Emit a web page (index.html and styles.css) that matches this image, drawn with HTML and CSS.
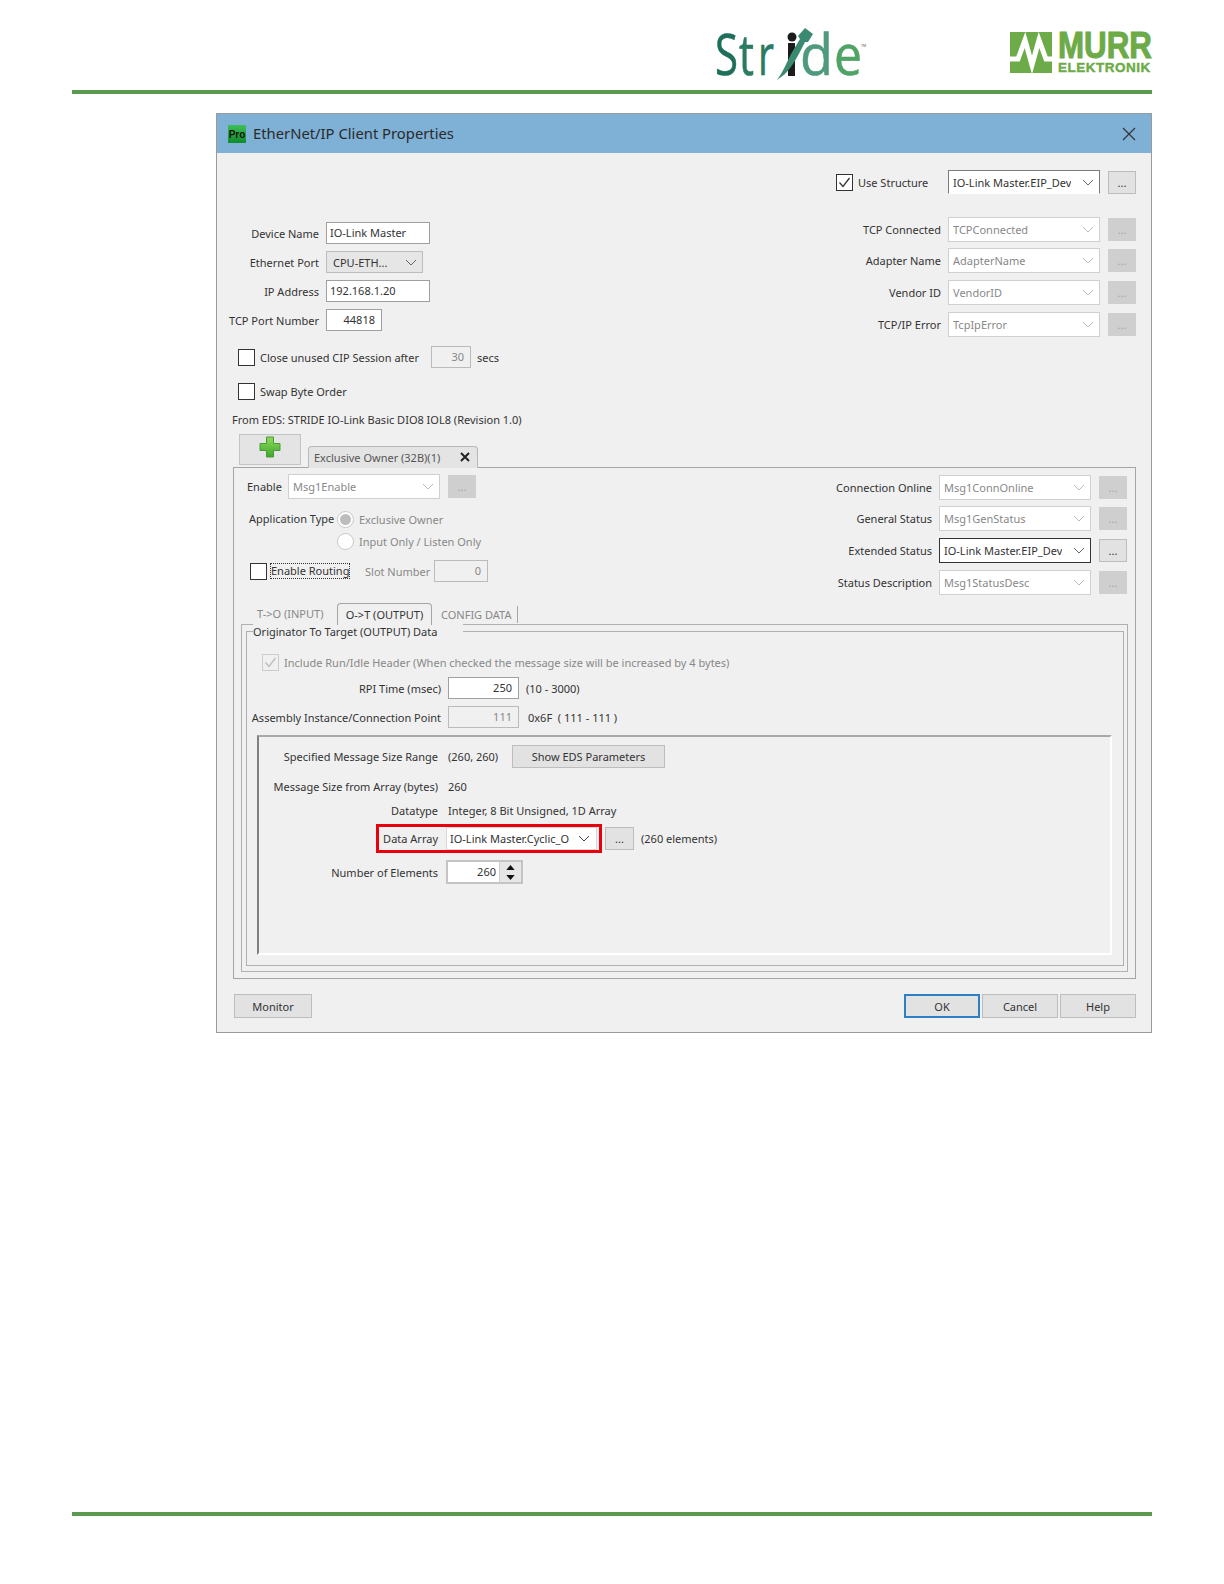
FILE: index.html
```html
<!DOCTYPE html>
<html lang="en">
<head>
<meta charset="utf-8">
<title>EtherNet/IP Client Properties</title>
<link rel="stylesheet" href="styles.css">
</head>
<body>
<svg class="defs" width="0" height="0">
  <defs>
    <symbol id="chev" viewBox="0 0 12 7"><polyline points="1,1 6,6 11,1" fill="none" stroke="currentColor" stroke-width="1"/></symbol>
    <symbol id="tick" viewBox="0 0 15 15"><polyline points="2.5,7.5 6,11.5 12.5,3" fill="none" stroke="currentColor" stroke-width="1.3"/></symbol>
  </defs>
</svg>
<div class="page">
  <header class="masthead">
    <svg class="logo-stride" viewBox="0 0 152 56" width="152" height="56">
      <text class="stride s1" x="2" y="49" textLength="23" lengthAdjust="spacingAndGlyphs">S</text>
      <text class="stride s2" x="26" y="49" textLength="15" lengthAdjust="spacingAndGlyphs">t</text>
      <text class="stride s2" x="45" y="49" textLength="16" lengthAdjust="spacingAndGlyphs">r</text>
      <text class="stride s3" x="87" y="49" textLength="33" lengthAdjust="spacingAndGlyphs">d</text>
      <text class="stride s4" x="121" y="49" textLength="28" lengthAdjust="spacingAndGlyphs">e</text>
      <rect x="75" y="17" width="7" height="33" fill="#1c1c1c"/>
      <circle cx="79" cy="11" r="4.500" fill="#1c1c1c"/>
      <path d="M64 54C70 46 74 36 78 28L87 13 85 10 92 2 100 8 95 16 92 16C86 28 80 40 72 48Z" fill="#3a8a72"/>
      <text class="stride-tm" x="148" y="21">TM</text>
    </svg>
    <div class="logo-murr">
      <svg viewBox="0 0 42 41" width="42" height="41">
        <rect width="42" height="41" fill="#6cab47"/>
        <polyline points="0,27 8,27 15,8 22,33 29,8 36,27 42,27" fill="none" stroke="#fff" stroke-width="5"/>
      </svg>
      <div class="murr-text">
        <span class="murr-big">MURR</span>
        <span class="murr-small">ELEKTRONIK</span>
      </div>
    </div>
  </header>
  <div class="rule"></div>

  <section class="dialog">
    <div class="titlebar">
      <span class="app-icon">Pro</span>
      <span class="title">EtherNet/IP Client Properties</span>
      <svg class="close" viewBox="0 0 14 14" width="14" height="14"><path d="M1 1 13 13M13 1 1 13" stroke="#333" stroke-width="1.2" fill="none"/></svg>
    </div>

    <div class="top">
      <div class="top-left">
        <div class="form-grid">
          <label class="lbl">Device Name</label><div class="input w104">IO-Link Master</div>
          <label class="lbl">Ethernet Port</label><div class="select"><span>CPU-ETH...</span><svg class="chev"><use href="#chev"/></svg></div>
          <label class="lbl">IP Address</label><div class="input w104">192.168.1.20</div>
          <label class="lbl">TCP Port Number</label><div class="input w56 right">44818</div>
        </div>
        <div class="check-row first">
          <span class="check"></span><span class="check-label close-label">Close unused CIP Session after</span>
          <div class="input ro w40 right secs-box">30</div><span class="secs">secs</span>
        </div>
        <div class="check-row swap">
          <span class="check"></span><span class="check-label">Swap Byte Order</span>
        </div>
        <div class="eds">From EDS: STRIDE IO-Link Basic DIO8 IOL8 (Revision 1.0)</div>
      </div>
      <div class="top-right">
        <div class="use-row">
          <span class="check"><svg class="tick"><use href="#tick"/></svg></span><span class="check-label use-label">Use Structure</span>
          <div class="combo open"><span>IO-Link Master.EIP_Dev</span><svg class="chev"><use href="#chev"/></svg></div>
          <button class="more">...</button>
        </div>
        <div class="map-rows">
          <div class="map-row"><label class="lbl">TCP Connected</label><div class="combo off"><span>TCPConnected</span><svg class="chev"><use href="#chev"/></svg></div><button class="more off">...</button></div>
          <div class="map-row"><label class="lbl">Adapter Name</label><div class="combo off"><span>AdapterName</span><svg class="chev"><use href="#chev"/></svg></div><button class="more off">...</button></div>
          <div class="map-row"><label class="lbl">Vendor ID</label><div class="combo off"><span>VendorID</span><svg class="chev"><use href="#chev"/></svg></div><button class="more off">...</button></div>
          <div class="map-row"><label class="lbl">TCP/IP Error</label><div class="combo off"><span>TcpIpError</span><svg class="chev"><use href="#chev"/></svg></div><button class="more off">...</button></div>
        </div>
      </div>
    </div>

    <div class="conn-tabs">
      <button class="add-btn">
        <svg viewBox="0 0 22 22" width="22" height="22">
          <defs><linearGradient id="pg" x1="0" x2="0" y1="0" y2="1"><stop offset="0" stop-color="#8fdc5a"/><stop offset="1" stop-color="#3fa52f"/></linearGradient></defs>
          <path d="M7.5 1h7v6.500H21v7h-6.500V21h-7v-6.500H1v-7h6.500z" fill="url(#pg)" stroke="#4b9a3a" stroke-width="1"/>
        </svg>
      </button>
      <div class="conn-tab"><span>Exclusive Owner (32B)(1)</span>
        <svg viewBox="0 0 10 10" width="10" height="10"><path d="M1 1 9 9M9 1 1 9" stroke="#222" stroke-width="2" fill="none"/></svg>
      </div>
    </div>

    <div class="panel">
      <div class="panel-top">
        <div class="panel-left">
          <div class="enable-row">
            <label class="enable-label">Enable</label>
            <div class="combo off"><span>Msg1Enable</span><svg class="chev"><use href="#chev"/></svg></div>
            <button class="more off">...</button>
          </div>
          <div class="app-type">
            <label class="app-label">Application Type</label>
            <div class="radios">
              <div class="radio-row"><span class="radio on"></span><span class="muted">Exclusive Owner</span></div>
              <div class="radio-row"><span class="radio"></span><span class="muted">Input Only / Listen Only</span></div>
            </div>
          </div>
          <div class="routing-row">
            <span class="check"></span>
            <span class="focus-label">Enable Routing</span>
            <span class="muted slot-label">Slot Number</span>
            <div class="input ro w54 right">0</div>
          </div>
        </div>
        <div class="panel-right">
          <div class="map-row"><label class="lbl">Connection Online</label><div class="combo off"><span>Msg1ConnOnline</span><svg class="chev"><use href="#chev"/></svg></div><button class="more off">...</button></div>
          <div class="map-row"><label class="lbl">General Status</label><div class="combo off"><span>Msg1GenStatus</span><svg class="chev"><use href="#chev"/></svg></div><button class="more off">...</button></div>
          <div class="map-row"><label class="lbl">Extended Status</label><div class="combo live"><span>IO-Link Master.EIP_Dev</span><svg class="chev"><use href="#chev"/></svg></div><button class="more">...</button></div>
          <div class="map-row"><label class="lbl">Status Description</label><div class="combo off"><span>Msg1StatusDesc</span><svg class="chev"><use href="#chev"/></svg></div><button class="more off">...</button></div>
        </div>
      </div>

      <div class="tabs">
        <div class="tab muted first-tab">T-&gt;O (INPUT)</div>
        <div class="tab active">O-&gt;T (OUTPUT)</div>
        <div class="tab muted last-tab">CONFIG DATA</div>
      </div>
      <div class="tab-body">
        <div class="group">
          <div class="group-title">Originator To Target (OUTPUT) Data</div>
          <div class="include-row">
            <span class="check off"><svg class="tick"><use href="#tick"/></svg></span>
            <span class="muted include-label">Include Run/Idle Header (When checked the message size will be increased by 4 bytes)</span>
          </div>
          <div class="field-row rpi">
            <label class="lbl">RPI Time (msec)</label><div class="input w71 right">250</div><span class="aside">(10 - 3000)</span>
          </div>
          <div class="field-row asm">
            <label class="lbl">Assembly Instance/Connection Point</label><div class="input ro w71 right">111</div><span class="aside wide">0x6F&nbsp; ( 111 - 111 )</span>
          </div>
          <div class="inner">
            <div class="inner-row spec">
              <label class="lbl">Specified Message Size Range</label><span class="val w64">(260, 260)</span><button class="btn eds-btn">Show EDS Parameters</button>
            </div>
            <div class="inner-row size">
              <label class="lbl">Message Size from Array (bytes)</label><span class="val">260</span>
            </div>
            <div class="inner-row dtype">
              <label class="lbl">Datatype</label><span class="val">Integer, 8 Bit Unsigned, 1D Array</span>
            </div>
            <div class="array-row">
              <div class="highlight">
                <label class="lbl hl-label">Data Array</label>
                <div class="combo hl-combo"><span>IO-Link Master.Cyclic_O</span><svg class="chev"><use href="#chev"/></svg></div>
              </div>
              <button class="more array-more">...</button>
              <span class="aside">(260 elements)</span>
            </div>
            <div class="inner-row count">
              <label class="lbl">Number of Elements</label>
              <div class="spinner"><span class="spin-val">260</span>
                <div class="spin-btns">
                  <span class="spin"><svg viewBox="0 0 10 6" width="9" height="5"><path d="M5 0 10 6H0z" fill="#111"/></svg></span>
                  <span class="spin"><svg viewBox="0 0 10 6" width="9" height="5"><path d="M0 0H10L5 6z" fill="#111"/></svg></span>
                </div>
              </div>
            </div>
          </div>
        </div>
      </div>
    </div>

    <div class="actions">
      <button class="btn act">Monitor</button>
      <div class="act-right">
        <button class="btn act ok">OK</button>
        <button class="btn act">Cancel</button>
        <button class="btn act">Help</button>
      </div>
    </div>
  </section>
  <div class="rule bottom"></div>
</div>
</body>
</html>
```
FILE: styles.css
```css
* { box-sizing: border-box; }
html, body { margin: 0; padding: 0; background: #fff; }
body { font-family: "Noto Sans", "Open Sans", sans-serif; font-size: 11px; color: #333; }
.defs { position: absolute; }
.page { width: 1224px; height: 1584px; padding: 0 72px; overflow: hidden; }

.masthead { height: 90px; display: flex; justify-content: flex-end; align-items: flex-start; padding-top: 26px; }
.logo-stride { margin-right: 145px; overflow: visible; }
.stride { font-family: "Open Sans", sans-serif; font-size: 56px; stroke-width: 0.6px; }
.s1 { fill: #1d6f5a; stroke: #1d6f5a; }
.s2 { fill: #2a7b62; stroke: #2a7b62; }
.s3 { fill: #4f9a7c; stroke: #4f9a7c; }
.s4 { fill: #4fa365; stroke: #4fa365; }
.stride-tm { font-size: 3.500px; fill: #555; }
.logo-murr { display: flex; gap: 6px; margin-top: 6px; }
.murr-text { display: flex; flex-direction: column; width: 94px; font-family: "Liberation Sans", sans-serif; font-weight: 700; color: #6cab47; }
.murr-big { font-size: 36px; line-height: 27px; height: 30px; transform: scaleX(0.87); transform-origin: left center; -webkit-text-stroke: 1px #6cab47; white-space: nowrap; }
.murr-small { font-size: 13.5px; line-height: 11px; letter-spacing: 0.5px; -webkit-text-stroke: 0.4px #6cab47; white-space: nowrap; }
.rule { height: 4px; background: #5a9a4f; }
.rule.bottom { margin-top: 479px; }

.dialog { margin: 19px 0 0 144px; width: 936px; height: 920px; border: 1px solid #9a9a9a; background: #f0f0f0; }
.titlebar { height: 39px; background: #7fb0d6; display: flex; align-items: center; padding: 0 15px 0 11px; }
.app-icon { width: 18px; height: 18px; background: linear-gradient(#3fbf55, #0f8a2e); color: #111; font: 700 10px/19px "Liberation Sans", sans-serif; text-align: center; }
.title { margin: 0 0 1px 7px; font-size: 14.8px; color: #2a2a2a; flex: 1; }

.lbl { text-align: right; white-space: nowrap; color: #333; }
.input { height: 22px; background: #fff; border: 1px solid #a0a0a0; line-height: 20px; padding: 0 3px; white-space: nowrap; }
.input.right { text-align: right; padding-right: 6px; }
.input.ro { background: #f0f0f0; color: #888; border-color: #bbb; }
.w104 { width: 104px; }
.w56 { width: 56px; }
.w40 { width: 40px; }
.w54 { width: 54px; }
.w71 { width: 71px; }
.select { width: 97px; height: 22px; background: #e6e6e6; border: 1px solid #bdbdbd; display: flex; align-items: center; justify-content: space-between; padding: 0 5px 0 6px; }
.chev { width: 12px; height: 7px; color: #666; flex: none; }
.check { width: 17px; height: 17px; flex: none; background: #fff; border: 1px solid #333; display: inline-flex; align-items: center; justify-content: center; }
.check.off { background: #f0f0f0; border-color: #ccc; color: #bbb; }
.tick { width: 15px; height: 15px; }
.muted { color: #888; }

.top { height: 281px; display: flex; justify-content: space-between; padding: 0 15px; }
.top-left { padding-top: 69px; width: 400px; }
.form-grid { display: grid; grid-template-columns: 87px auto; justify-content: start; column-gap: 7px; row-gap: 7px; align-items: center; justify-items: start; }
.form-grid .lbl { justify-self: end; }
.check-row { display: flex; align-items: center; height: 22px; margin-top: 13px; padding-left: 6px; }
.check-row.first { margin-top: 15px; }
.check-row.swap { margin-top: 12px; }
.check-label { margin-left: 5px; white-space: nowrap; }
.close-label { width: 158px; }
.secs-box { margin-left: 13px; }
.secs { margin-left: 6px; }
.eds { margin-top: 10px; height: 16px; line-height: 16px; white-space: nowrap; }

.top-right { padding-top: 17px; width: 320px; }
.use-row { display: flex; align-items: center; justify-content: flex-end; height: 24px; }
.use-label { width: 69px; margin-right: 21px; }
.combo { width: 152px; height: 25px; background: #fff; border: 1px solid #d0d0d0; display: flex; align-items: center; justify-content: space-between; padding: 0 5px 0 4px; flex: none; white-space: nowrap; overflow: hidden; }
.combo span { overflow: hidden; }
.combo.open { height: 24px; border-color: #7a7a7a #7a7a7a #fff; }
.combo.off { color: #888; }
.combo.off .chev { color: #bbb; }
.combo.live { border-color: #333; }
.more { width: 28px; height: 23px; margin-left: 8px; flex: none; padding: 0; background: #e2e2e2; border: 1px solid #bdbdbd; color: #333; font: 11px "Noto Sans", sans-serif; }
.more.off { background: #cfcfcf; border-color: #cfcfcf; color: #a5a5a5; }
.map-rows { display: flex; flex-direction: column; gap: 6.7px; margin-top: 22.500px; }
.map-row { display: flex; align-items: center; justify-content: flex-end; height: 25px; }
.map-row .lbl { margin-right: 7px; }

.conn-tabs { height: 33px; display: flex; align-items: flex-start; padding-left: 22px; position: relative; z-index: 1; }
.add-btn { width: 62px; height: 31px; padding: 0 0 2px; background: #e4e4e4; border: 1px solid #c4c4c4; }
.conn-tab { width: 170px; height: 22px; margin: 12px 0 0 7px; background: #e4e4e4; border: 1px solid #b8b8b8; border-bottom-color: #e4e4e4; border-radius: 4px 4px 0 0; display: flex; align-items: center; justify-content: space-between; padding: 0 7px 0 5px; color: #555; }

.panel { margin-left: 16px; width: 903px; height: 512px; border: 1px solid #a5a5a5; padding: 6px 7px 0; }
.panel-top { height: 129px; display: flex; justify-content: space-between; }
.panel-left { padding: 0 0 0 6px; }
.enable-row { display: flex; align-items: center; height: 25px; }
.enable-label { width: 34px; margin-right: 7px; white-space: nowrap; }
.app-type { display: flex; margin-top: 10px; padding-left: 2px; }
.app-label { width: 88px; line-height: 20px; white-space: nowrap; }
.radios { display: flex; flex-direction: column; gap: 1px; }
.radio-row { display: flex; align-items: center; gap: 5px; height: 21px; }
.radio { width: 17px; height: 17px; border-radius: 50%; background: #fff; border: 1px solid #c8c8c8; display: flex; align-items: center; justify-content: center; }
.radio.on::after { content: ""; width: 11px; height: 11px; border-radius: 50%; background: #bdbdbd; }
.routing-row { display: flex; align-items: center; height: 22px; margin-top: 8px; padding-left: 3px; }
.focus-label { margin-left: 4px; width: 78px; outline: 1px dotted #333; line-height: 14px; white-space: nowrap; }
.slot-label { width: 61px; margin: 0 8px 0 16px; white-space: nowrap; }
.panel-right { display: flex; flex-direction: column; gap: 6.7px; padding: 0.5px 1px 0 0; }

.tabs { height: 21px; display: flex; align-items: flex-start; padding-left: 16px; }
.tab { height: 21px; line-height: 22px; white-space: nowrap; }
.first-tab { width: 80px; }
.tab.active { width: 95px; height: 22px; text-align: center; color: #333; background: #f0f0f0; border: 1px solid #a5a5a5; border-bottom: 0; border-radius: 4px 4px 0 0; position: relative; z-index: 1; }
.last-tab { margin-left: 9px; width: 77px; border-right: 1px solid #a5a5a5; height: 17px; line-height: 17px; margin-top: 3px; }

.tab-body { width: 887px; height: 348px; border: 1px solid #b0b0b0; padding: 6px 3px 0 4px; }
.group { height: 335px; border: 1px solid #b0b0b0; }
.group-title { margin: -8px 0 0 6px; width: 210px; height: 16px; line-height: 16px; background: #f0f0f0; color: #333; }
.include-row { display: flex; align-items: center; height: 17px; margin-top: 14px; padding-left: 15px; }
.include-label { margin-left: 5px; white-space: nowrap; }
.field-row { display: flex; align-items: center; height: 22px; }
.field-row .lbl { width: 194px; margin-right: 7px; }
.rpi { margin-top: 6px; }
.asm { margin-top: 7px; }
.aside { margin-left: 7px; white-space: nowrap; }
.aside.wide { margin-left: 9px; }

.inner { margin: 7px 0 0 10px; width: 855px; height: 220px; border: 2px solid #fff; border-left-color: #808080; border-top-color: #a8a8a8; }
.inner-row { display: flex; align-items: center; }
.inner-row .lbl { width: 179px; }
.val { margin-left: 10px; white-space: nowrap; }
.w64 { width: 64px; flex: none; }
.btn { background: #e2e2e2; border: 1px solid #bdbdbd; color: #333; font: 11px "Noto Sans", sans-serif; padding: 0; }
.eds-btn { width: 153px; height: 23px; }
.spec { height: 23px; margin-top: 8px; }
.size { height: 16px; margin-top: 10px; }
.dtype { height: 16px; margin-top: 8px; }
.array-row { display: flex; align-items: center; margin-top: 6px; height: 29px; padding-left: 117px; }
.highlight { width: 226px; height: 29px; border: 3px solid #e8000d; display: flex; align-items: center; }
.hl-label { width: 59px; margin-right: 8px; }
.hl-combo { width: 151px; height: 23px; padding: 0 6px 0 3px; border-color: #d8d8d8; }
.hl-combo .chev { color: #444; }
.array-more { margin-left: 3px; width: 29px; }
.count { height: 24px; margin-top: 7px; }
.spinner { margin-left: 8px; width: 77px; height: 24px; background: #fff; border: 2px solid #c4c4c4; display: flex; }
.spin-val { flex: 1; text-align: right; padding-right: 3px; line-height: 20px; }
.spin-btns { width: 22px; background: #e6e6e6; border-left: 1px solid #ccc; display: flex; flex-direction: column; }
.spin { flex: 1; display: flex; align-items: center; justify-content: center; }

.actions { display: flex; justify-content: space-between; margin: 15px 15px 0 17px; }
.act-right { display: flex; gap: 2px; }
.act { width: 76px; height: 24px; }
.actions > .act { width: 78px; }
.ok { border: 2px solid #2f7fc4; }
```
